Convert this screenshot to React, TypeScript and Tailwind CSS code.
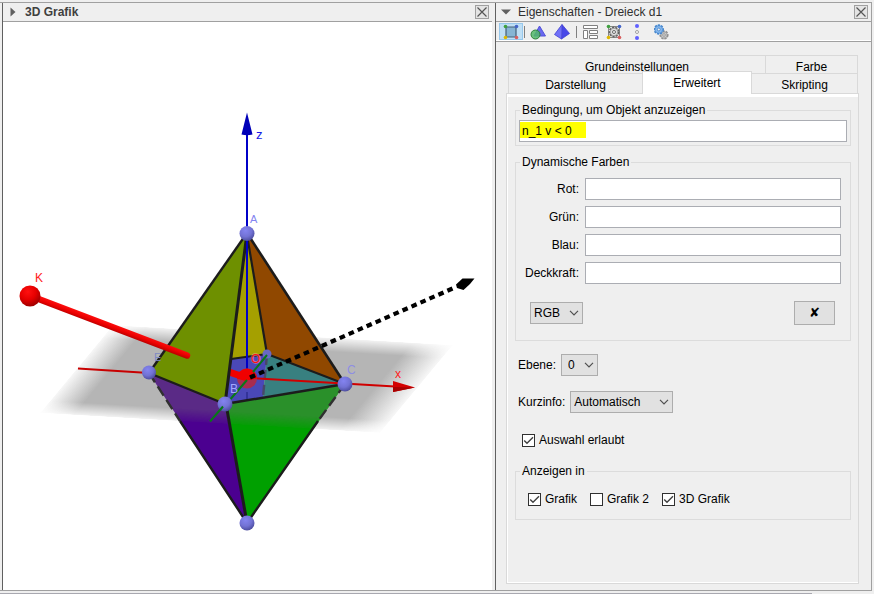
import { useState } from 'react';
import type { ReactNode } from 'react';

function CloseButton({ label }: { label: string }) {
  return (
    <button type="button" aria-label={label} className="flex size-[14px] items-center justify-center border border-[#a0a0a0] bg-[#e4e4e4]">
      <svg viewBox="0 0 12 12" className="size-3" stroke="#555" strokeWidth="1.2">
        <path d="M1.5 1.5 10.5 10.5M10.5 1.5 1.5 10.5" />
      </svg>
    </button>
  );
}

function PanelHeader({ title, open, bold }: { title: string; open?: boolean; bold?: boolean }) {
  return (
    <header className="flex h-[19px] items-center border-b border-[#a0a0a0] pr-[3px] pl-[5px]">
      <svg viewBox="0 0 10 10" className="size-[10px]" fill="#606060">
        {open ? <path d="M0 2.5h10L5 7.5z" /> : <path d="M2.500 0.500v9L7.500 5z" />}
      </svg>
      <h2 className={bold ? 'ml-[7px] flex-1 font-bold text-[#404040]' : 'ml-[7px] flex-1 text-[#303030]'}>{title}</h2>
      <CloseButton label={`${title} schließen`} />
    </header>
  );
}

function Scene() {
  return (
    <svg viewBox="3 22 489 568" className="block h-full w-full" role="img" aria-label="3D Grafik">
      <defs>
        <linearGradient id="planeFill">
          <stop offset="0" stopColor="#b5b5b5" stopOpacity="0.1" />
          <stop offset="0.1" stopColor="#b5b5b5" />
          <stop offset="0.88" stopColor="#b5b5b5" />
          <stop offset="1" stopColor="#b5b5b5" stopOpacity="0.1" />
        </linearGradient>
        <linearGradient id="fade" x1="0" y1="0" x2="0" y2="1">
          <stop offset="0" stopColor="#fff" stopOpacity="0.15" />
          <stop offset="0.15" stopColor="#fff" />
          <stop offset="0.86" stopColor="#fff" />
          <stop offset="1" stopColor="#fff" stopOpacity="0.15" />
        </linearGradient>
        <mask id="planeMask" x="0" y="0" width="1" height="1" maskContentUnits="objectBoundingBox">
          <rect width="1" height="1" fill="url(#fade)" />
        </mask>
        <clipPath id="lowerFaces">
          <path d="M149 373 225 404 345 384 247 523z" />
        </clipPath>
        <radialGradient id="redBall" cx="0.4" cy="0.3" r="0.75">
          <stop offset="0" stopColor="#ff1010" />
          <stop offset="0.5" stopColor="#e60000" />
          <stop offset="1" stopColor="#960000" />
        </radialGradient>
        <radialGradient id="blueBall" cx="0.4" cy="0.3" r="0.75">
          <stop offset="0" stopColor="#8484f0" />
          <stop offset="0.55" stopColor="#7272d4" />
          <stop offset="1" stopColor="#484898" />
        </radialGradient>
        <linearGradient id="rod" gradientUnits="userSpaceOnUse" x1="110" y1="322" x2="107" y2="330">
          <stop offset="0" stopColor="#ff1010" />
          <stop offset="0.5" stopColor="#ec0000" />
          <stop offset="1" stopColor="#a80000" />
        </linearGradient>
      </defs>

      {/* xy plane */}
      <g transform="matrix(340 20 -73 88 113 325)">
        <rect width="1" height="1" fill="url(#planeFill)" mask="url(#planeMask)" />
      </g>
      <path d="M78 368.500 149 373" stroke="#c80000" strokeWidth="1.8" />

      {/* lower pyramid */}
      <path d="M149 373 225 404 247 523z" fill="#4b0090" />
      <path d="M225 404 345 384 247 523z" fill="#00a000" />
      <g clipPath="url(#lowerFaces)">
        <g transform="matrix(340 20 -73 88 113 325)" opacity="0.36">
          <rect width="1" height="1" fill="#747474" mask="url(#planeMask)" />
        </g>
      </g>
      <path d="M149 373 180 421" stroke="#303030" strokeWidth="2.4" strokeDasharray="11 5" />
      <path d="M345 384 318 421" stroke="#303030" strokeWidth="2.4" strokeDasharray="11 5" />
      <path d="M180 421 247 523 318 421" fill="none" stroke="#1c1c1c" strokeWidth="2.4" />
      <path d="M226 404 247 523" stroke="#1c1c1c" strokeWidth="3" />

      {/* inside of the upper pyramid */}
      <path d="M247 233 231 359 267 353z" fill="#a5a000" />
      <path d="M247 233 267 354 345 384z" fill="#904800" />
      <path d="M231 359 267 354 263 397 225 404z" fill="#4a48b8" />
      <path d="M267 354 345 384 263 397z" fill="#388080" />
      <path d="M247 392v8" stroke="#33339a" strokeWidth="2" />
      <path d="M267 355 263 397" stroke="#484868" strokeWidth="2.4" strokeDasharray="10 5" />
      <path d="M231 359 267 354" stroke="#1c1c1c" strokeWidth="2" />
      <path d="M247 235 267 354" stroke="#1c1c1c" strokeWidth="2.2" />
      <path d="M267 354 345 384" stroke="#1c1c1c" strokeWidth="2" />
      <path d="M225 404 345 384" stroke="#1c1c1c" strokeWidth="2.4" />
      <path d="M247 123V376" stroke="#0000c8" strokeWidth="2" />
      <path d="M247 112.5 252.5 134.500Q247 136 241.500 134.500z" fill="#0000b8" />
      <path d="M250 378 395 386.500" stroke="#d00000" strokeWidth="1.8" />
      <path d="M393 381 415 387.500 393 392z" fill="#d40000" />
      <path d="M393 387 415 387.500 393 392z" fill="#a80000" />
      <circle cx="247" cy="378.500" r="10" fill="#a82c50" />
      <path d="M229 372 247 378" stroke="#f00000" strokeWidth="7" />
      <path d="M237 378.500a10 10 0 0 1 20 0Q247 382 237 378.500z" fill="#f00000" />
      <circle cx="267" cy="354" r="4.500" fill="#6868c4" />
      <path d="M228 402 247 380M253 372 267 355" stroke="#087818" strokeWidth="2" />

      {/* front face */}
      <path d="M247 233 149 373 225 404z" fill="#6e9000" />
      <path d="M149 373 225 404" stroke="#1c1c1c" strokeWidth="2.4" />
      <path d="M247 233 149 373" stroke="#1c1c1c" strokeWidth="2.4" />
      <path d="M247 233 225 404" stroke="#1c1c1c" strokeWidth="3" />
      <path d="M247 233 345 384" stroke="#1c1c1c" strokeWidth="2.6" />
      <path d="M247 240V300" stroke="#0000c8" strokeWidth="2" />

      <text x="154" y="361" fontSize="11" fill="#7d88c4">E</text>
      <circle cx="149" cy="372.500" r="7" fill="url(#blueBall)" />
      <circle cx="225" cy="404" r="7.500" fill="url(#blueBall)" />
      <circle cx="345" cy="384" r="7.500" fill="url(#blueBall)" />
      <circle cx="247" cy="233.500" r="7.500" fill="url(#blueBall)" />
      <circle cx="247" cy="523" r="7.500" fill="url(#blueBall)" />
      <path d="M210 421.500 223 406.500" stroke="#087818" strokeWidth="2" />

      {/* vectors */}
      <path d="M36 298 187 355.500" stroke="url(#rod)" strokeWidth="6.500" strokeLinecap="round" />
      <circle cx="30" cy="296" r="10.500" fill="url(#redBall)" />
      <path d="M250 377.500 456 287" stroke="#000" strokeWidth="4.200" strokeDasharray="5.600 4.200" />
      <path d="M456 284.500 462.500 278.500 474.500 278.500 470 284 463.500 290 457 288z" fill="#000" />

      {/* labels */}
      <g fontSize="12" fill="#8484f0">
        <text x="250" y="223" fontSize="11">A</text>
        <text x="230" y="393" fill="#a4a8ff">B</text>
        <text x="347" y="374" fillOpacity="0.800">C</text>
        <text x="256" y="139" fill="#1818e8" fontSize="13">z</text>
        <text x="395" y="378" fill="#ff2020">x</text>
        <text x="35" y="282" fill="#ff1818">K</text>
        <text x="251" y="363" fill="#ff1010" stroke="#ffb0c0" strokeOpacity="0.500" strokeWidth="1.500" paintOrder="stroke">O</text>
      </g>
    </svg>
  );
}

function CornerDots() {
  return (
    <>
      <circle cx="2.500" cy="2.500" r="1.800" fill="#3fa040" />
      <circle cx="13.500" cy="2.500" r="1.800" fill="#4465c8" />
      <circle cx="2.500" cy="13.500" r="1.800" fill="#e0b800" />
      <circle cx="13.500" cy="13.500" r="1.800" fill="#d86060" />
    </>
  );
}

function ToolButton({ label, active, children }: { label: string; active?: boolean; children: ReactNode }) {
  return (
    <button
      type="button"
      aria-label={label}
      aria-pressed={active}
      className={active ? 'flex h-[17px] w-6 items-center justify-center border border-[#98c8ec] bg-[#bfdff5]' : 'flex h-[17px] w-6 items-center justify-center'}
    >
      <svg viewBox="0 0 16 16" className="size-4">{children}</svg>
    </button>
  );
}

function Gear({ x, y, r, fill, stroke }: { x: number; y: number; r: number; fill: string; stroke: string }) {
  return (
    <g transform={`translate(${x} ${y})`}>
      <circle r={r} fill={fill} stroke={stroke} strokeWidth="1.600" strokeDasharray="2.200 1" />
      <circle r={r - 0.8} fill={fill} stroke={stroke} strokeWidth="0.500" />
      <circle r={r / 3} fill="#efefef" stroke={stroke} strokeWidth="0.900" />
    </g>
  );
}

function Toolbar() {
  return (
    <div className="flex h-5 items-center border-b border-[#a0a0a0] pl-[3px] shadow-[inset_0_-1px_0_#fff]">
      <ToolButton label="Objekte" active>
        <path d="M3 3h10v10H3z" fill="#87b5d4" stroke="#446078" strokeWidth="1.200" />
        <CornerDots />
      </ToolButton>
      <span className="mx-px h-3 w-px bg-[#808080]" />
      <ToolButton label="Grafik">
        <path d="M9.500 2 15.500 12H4z" fill="#6868f0" stroke="#5050d8" />
        <circle cx="5.500" cy="10.500" r="4.500" fill="#52b868" fillOpacity="0.850" stroke="#30803c" />
      </ToolButton>
      <ToolButton label="3D Grafik">
        <path d="M8 0.500 15.500 9.500 7.500 15z" fill="#4848e8" />
        <path d="M8 0.500 7.500 15 0.500 10.500z" fill="#7070f8" />
        <path d="M8 0.500 15.500 9.500 7.500 15 0.500 10.500zL7.500 15" fill="none" stroke="#4040d0" strokeWidth="0.800" />
      </ToolButton>
      <span className="mr-px ml-[2px] h-3 w-px bg-[#808080]" />
      <ToolButton label="Layout">
        <path d="M1.500 1.500h14v3h-14zM1.500 6.500h4v8h-4zM7.500 6.500h8v3h-8zM7.500 11.500h8v3h-8z" fill="#fff" stroke="#808080" />
      </ToolButton>
      <ToolButton label="Voreinstellungen">
        <path d="M2.500 2.500h11v11h-11z" fill="#e4e4e4" stroke="#888" />
        <Gear x={8} y={8} r={4.6} fill="#e0e0e0" stroke="#606060" />
        <CornerDots />
      </ToolButton>
      <ToolButton label="Algebra">
        <circle cx="7" cy="2" r="2" fill="#6060ff" />
        <circle cx="7" cy="8" r="1.500" fill="#fff" stroke="#a0a0a0" />
        <circle cx="7" cy="14" r="2" fill="#6060ff" />
      </ToolButton>
      <ToolButton label="Erweitert">
        <Gear x={10} y={11} r={3.8} fill="#c8c8c8" stroke="#909090" />
        <Gear x={4.8} y={5.5} r={4.4} fill="#88baf0" stroke="#4686cc" />
      </ToolButton>
    </div>
  );
}

const tabBase = 'border-[#d9d9d9] text-center leading-[22px]';

function Tabs() {
  return (
    <div role="tablist" className="mr-px ml-[2px]">
      <div className="flex h-[18px] border-t border-l border-[#d9d9d9]">
        <button type="button" role="tab" className={`${tabBase} flex-1 border-r`}>Grundeinstellungen</button>
        <button type="button" role="tab" className={`${tabBase} w-[92px] border-r`}>Farbe</button>
      </div>
      <div className="flex h-5 items-end">
        <button type="button" role="tab" className={`${tabBase} h-5 flex-1 border-t border-l`}>Darstellung</button>
        <button type="button" role="tab" aria-selected="true" className="z-10 -mb-px h-[23px] w-[110px] border border-b-0 border-[#d9d9d9] bg-white text-center leading-[22px]">Erweitert</button>
        <button type="button" role="tab" className={`${tabBase} h-5 w-[106px] border-t border-r`}>Skripting</button>
      </div>
    </div>
  );
}

function Group({ title, className, children }: { title: string; className?: string; children: ReactNode }) {
  return (
    <fieldset className={`border border-[#dcdcdc] ${className ?? ''}`}>
      <legend className="ml-1 px-[2px] leading-4">{title}</legend>
      {children}
    </fieldset>
  );
}

function Dropdown({ id, options, className }: { id: string; options: string[]; className: string }) {
  return (
    <span className={`relative block ${className}`}>
      <select id={id} aria-label={id} className="h-[22px] w-full appearance-none border border-[#adadad] bg-[#e1e1e1] leading-5">
        {options.map((option) => (
          <option key={option}>{option}</option>
        ))}
      </select>
      <svg viewBox="0 0 10 6" className="pointer-events-none absolute top-2 right-1 h-[6px] w-[10px]" fill="none" stroke="#505050" strokeWidth="1.200">
        <path d="M1 0.800 5 4.800 9 0.800" />
      </svg>
    </span>
  );
}

function Check({ label, initial }: { label: string; initial: boolean }) {
  const [checked, setChecked] = useState(initial);
  return (
    <label className="flex items-center gap-1 leading-4">
      <span className="relative block size-[13px]">
        <input type="checkbox" checked={checked} onChange={() => setChecked(!checked)} className="block size-[13px] appearance-none border border-[#303030] bg-white" />
        {checked && (
          <svg viewBox="0 0 13 13" className="pointer-events-none absolute inset-0 size-[13px]" fill="none" stroke="#404040" strokeWidth="1.400">
            <path d="M2.200 6.500 5 9.300 11 3.300" />
          </svg>
        )}
      </span>
      {label}
    </label>
  );
}

const channels = ['Rot', 'Grün', 'Blau', 'Deckkraft'];
const fieldClass = 'h-[22px] w-full min-w-0 border border-[#abadb3] bg-white px-[2px]';

export default function App() {
  return (
    <div className="flex min-h-screen flex-col bg-[#efefef] pt-[2px] font-['Liberation_Sans',Arial,sans-serif] text-[12px] leading-4 text-black">
      <main className="mr-[2px] flex flex-1 border-t border-r border-b border-[#a0a0a0] pl-[2px]">
        <section className="flex min-w-0 flex-1 flex-col border-l border-[#606060]">
          <PanelHeader title="3D Grafik" bold />
          <div className="min-h-0 flex-1 bg-white">
            <Scene />
          </div>
        </section>

        <section className="ml-[3px] flex w-[376px] shrink-0 flex-col border-l border-[#606060]">
          <PanelHeader title="Eigenschaften - Dreieck d1" open />
          <Toolbar />
          <div className="mt-[13px] mr-3 mb-[6px] ml-[10px] flex flex-1 flex-col">
            <Tabs />
            <div role="tabpanel" className="flex-1 border border-[#d9d9d9] pt-2 pr-[7px] pl-2 shadow-[inset_1px_-1px_0_#fff,inset_0_3px_0_#fff]">
              <Group title="Bedingung, um Objekt anzuzeigen">
                <div className="px-[3px] pt-[2px] pb-[3px]">
                  <input
                    aria-label="Bedingung, um Objekt anzuzeigen"
                    defaultValue="n_1 v < 0"
                    className="block h-[22px] w-full border border-[#abadb3] bg-white bg-[linear-gradient(#ff0,#ff0)] bg-[length:66px_16px] bg-[position:0_1px] bg-no-repeat px-[2px]"
                  />
                </div>
              </Group>

              <Group title="Dynamische Farben" className="mt-2">
                <div className="px-[9px] pt-2 pb-[15px]">
                  <div className="grid grid-cols-[54px_1fr] items-center gap-[6px]">
                    {channels.map((name) => (
                      <div key={name} className="contents">
                        <label htmlFor={name} className="text-right">{name}:</label>
                        <input id={name} className={fieldClass} />
                      </div>
                    ))}
                  </div>
                  <div className="mt-[17px] flex items-center justify-between pr-[6px] pl-[5px]">
                    <Dropdown id="Farbmodell" options={['RGB', 'HSV', 'HSL']} className="w-[53px] [&>select]:pl-[3px]" />
                    <button type="button" aria-label="Löschen" className="h-6 w-[41px] border border-[#adadad] bg-[#e1e1e1] font-['DejaVu_Sans',sans-serif] text-[13px] font-bold">✘</button>
                  </div>
                </div>
              </Group>

              <div className="mt-[13px] flex items-center gap-[5px] pl-[3px]">
                <label htmlFor="Ebene">Ebene:</label>
                <Dropdown id="Ebene" options={['0', '1', '2', '3']} className="w-[37px] [&>select]:pl-[6px]" />
              </div>
              <div className="mt-[15px] flex items-center gap-[5px] pl-[3px]">
                <label htmlFor="Kurzinfo">Kurzinfo:</label>
                <Dropdown id="Kurzinfo" options={['Automatisch', 'An', 'Aus']} className="w-[103px] [&>select]:pl-[3px]" />
              </div>
              <div className="mt-[19px] flex pl-[7px]">
                <Check label="Auswahl erlaubt" initial />
              </div>

              <Group title="Anzeigen in" className="mt-[15px]">
                <div className="flex gap-[13px] py-3 pl-3">
                  <Check label="Grafik" initial />
                  <Check label="Grafik 2" initial={false} />
                  <Check label="3D Grafik" initial />
                </div>
              </Group>
            </div>
          </div>
        </section>
      </main>
      <footer className="mt-[2px] mr-[62px] h-px bg-[#a8a8b0]" />
    </div>
  );
}
